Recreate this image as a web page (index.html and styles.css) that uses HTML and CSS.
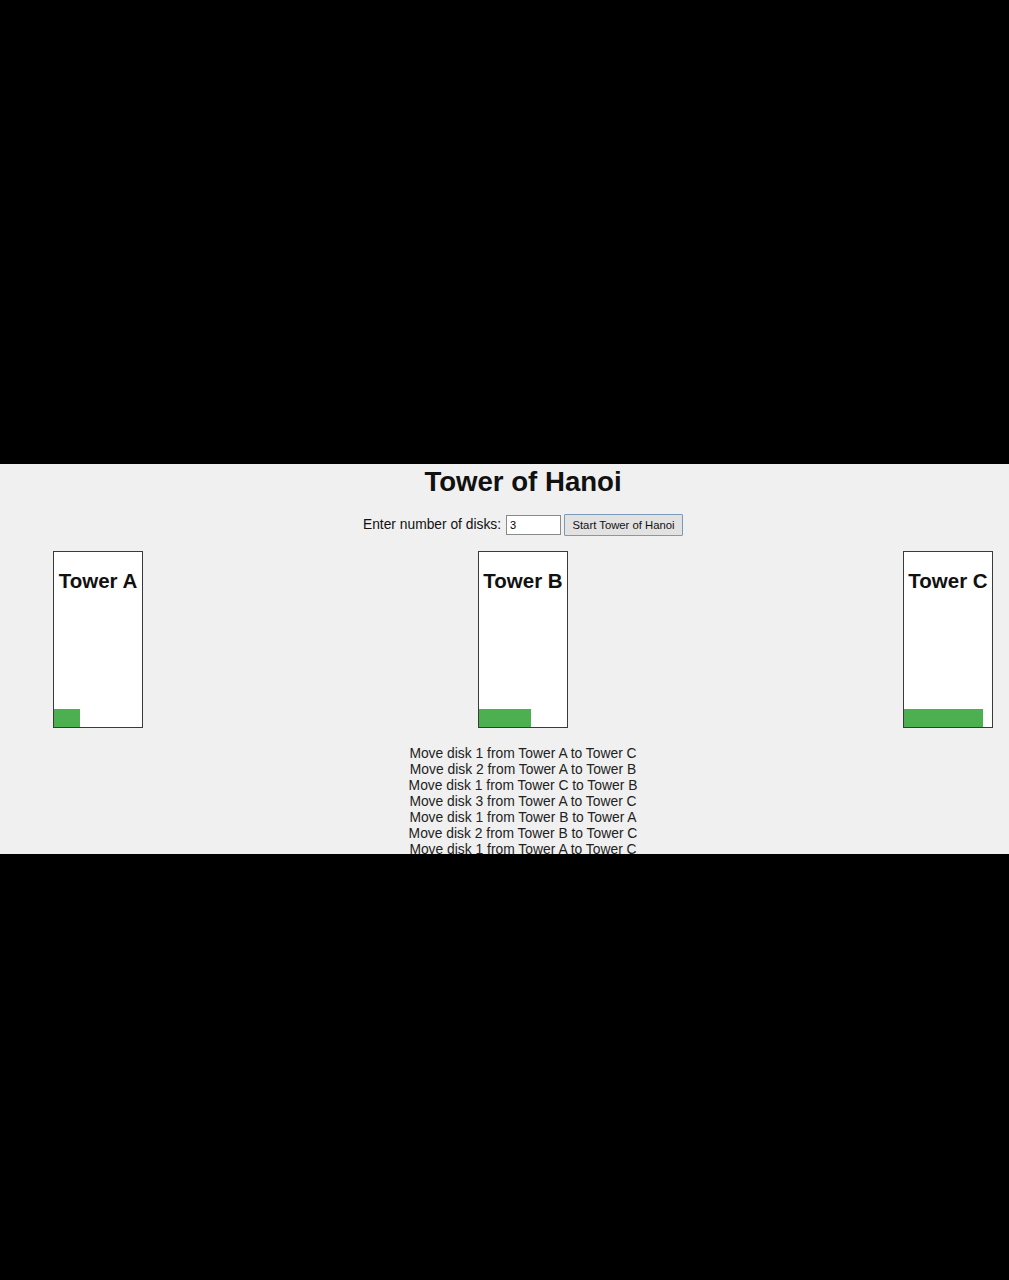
FILE: index.html
```html
<!DOCTYPE html>
<html>
<head>
<meta charset="utf-8">
<link rel="stylesheet" href="styles.css">
</head>
<body>
<div class="band">
  <div class="stage">
    <h1 class="title">Tower of Hanoi</h1>
    <div class="controls">
      <label class="label" for="disks">Enter number of disks:</label>
      <input id="disks" class="input" type="text" value="3">
      <button class="btn">Start Tower of Hanoi</button>
    </div>
    <div class="towers">
      <div class="tower">
        <h2 class="tower-name">Tower A</h2>
        <div class="disk d1"></div>
      </div>
      <div class="tower">
        <h2 class="tower-name">Tower B</h2>
        <div class="disk d2"></div>
      </div>
      <div class="tower">
        <h2 class="tower-name">Tower C</h2>
        <div class="disk d3"></div>
      </div>
    </div>
    <div class="moves">
      <div>Move disk 1 from Tower A to Tower C</div>
      <div>Move disk 2 from Tower A to Tower B</div>
      <div>Move disk 1 from Tower C to Tower B</div>
      <div>Move disk 3 from Tower A to Tower C</div>
      <div>Move disk 1 from Tower B to Tower A</div>
      <div>Move disk 2 from Tower B to Tower C</div>
      <div>Move disk 1 from Tower A to Tower C</div>
    </div>
  </div>
</div>
</body>
</html>
```
FILE: styles.css
```css
html, body {
  margin: 0;
  padding: 0;
  background: #000;
  height: 1280px;
  overflow: hidden;
}
.band {
  margin-top: 464px;
  height: 390px;
  background: #f0f0f0;
  overflow: hidden;
  font-family: "Liberation Sans", Arial, sans-serif;
  color: #111;
}
.stage {
  width: 1046px;
}
.title {
  margin: 0;
  padding-top: 1px;
  font-size: 27.6px;
  line-height: 34px;
  font-weight: bold;
  text-align: center;
}
.controls {
  display: flex;
  justify-content: center;
  align-items: center;
  margin-top: 13px;
  height: 25px;
  font-size: 13.8px;
}
.label {
  margin-right: 5px;
}
.input {
  box-sizing: border-box;
  width: 55px;
  height: 20px;
  border: 1px solid #8a8a8a;
  padding: 0 3px;
  font-family: "Liberation Sans", Arial, sans-serif;
  font-size: 11px;
  background: #fff;
  margin: 0 3px 0 0;
}
.btn {
  box-sizing: border-box;
  width: 119px;
  height: 22px;
  border: 1px solid #7a9ab8;
  border-radius: 1px;
  background: #e2e2e2;
  font-family: "Liberation Sans", Arial, sans-serif;
  font-size: 11.3px;
  color: #111;
  padding: 0;
  margin: 0;
}
.towers {
  display: flex;
  justify-content: space-between;
  padding: 0 53px;
  margin-top: 14px;
}
.tower {
  box-sizing: border-box;
  width: 90px;
  height: 177px;
  border: 1px solid #3a3a3a;
  background: #fff;
  display: flex;
  flex-direction: column;
  justify-content: space-between;
}
.tower-name {
  margin: 17px 0 0;
  font-size: 20.5px;
  line-height: 24px;
  font-weight: bold;
  text-align: center;
}
.disk {
  height: 18px;
  background: #4caf50;
}
.d1 { width: 26px; }
.d2 { width: 52px; }
.d3 { width: 79px; }
.moves {
  margin-top: 17px;
  font-size: 13.85px;
  line-height: 16px;
  text-align: center;
  color: #222;
}
```
